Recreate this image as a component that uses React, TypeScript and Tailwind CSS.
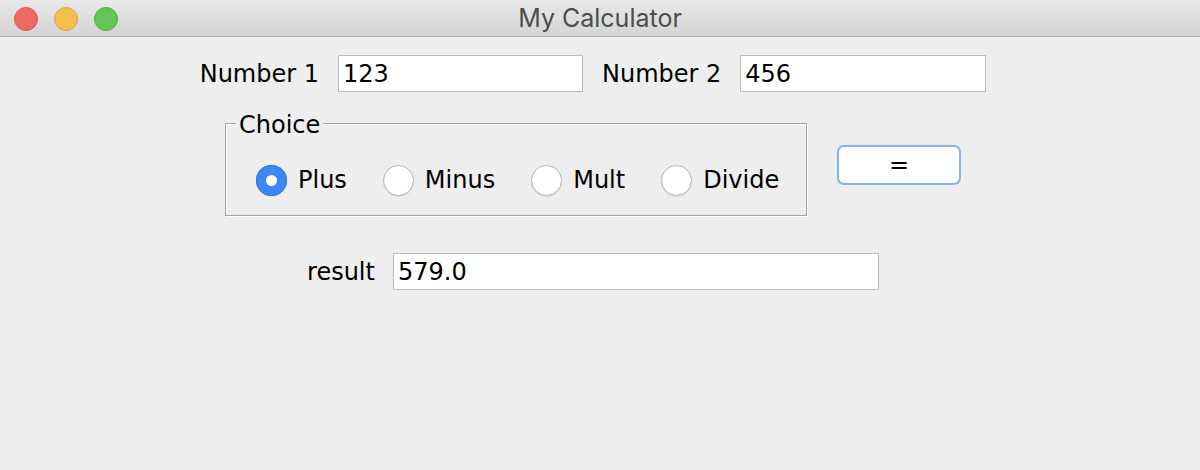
import React from 'react';

const TrafficLight = ({ className }: { className: string }) => (
  <span className={`block h-[24px] w-[24px] rounded-full border ${className}`} />
);

const TextField = ({ value, width }: { value: string; width: string }) => (
  <input
    readOnly
    value={value}
    className={`h-[37px] ${width} border border-[#bcbcbc] bg-white pl-[4px] text-black outline-none`}
  />
);

const Radio = ({ label, checked }: { label: string; checked?: boolean }) => (
  <label className="flex items-center gap-[11px]">
    {checked ? (
      <span className="flex h-[31px] w-[31px] items-center justify-center rounded-full bg-[#3b87f6] shadow-[inset_0_0_0_1px_#3179e6]">
        <span className="h-[11px] w-[11px] rounded-full bg-white" />
      </span>
    ) : (
      <span className="h-[31px] w-[31px] rounded-full border border-[#b5b5b5] bg-white shadow-[0_1px_1px_rgba(0,0,0,0.08)]" />
    )}
    <span>{label}</span>
  </label>
);

export default function App() {
  return (
    <div className="h-[470px] w-[1200px] overflow-hidden bg-[#eeeeee]">
      {/* Window title bar */}
      <div className="grid h-[37px] grid-cols-[1fr_auto_1fr] items-center border-b border-[#b4b4b4] bg-gradient-to-b from-[#e9e9e9] to-[#d4d4d4] pb-[3px]">
        <div className="flex items-center gap-[16px] pl-[14px]">
          <TrafficLight className="border-[#d8574c] bg-[#ee6a5f]" />
          <TrafficLight className="border-[#dba443] bg-[#f5bf4f]" />
          <TrafficLight className="border-[#4fae42] bg-[#62c554]" />
        </div>
        <div className="font-['Inter',sans-serif] text-[25px] text-[#4d4d4d]">My Calculator</div>
        <div />
      </div>

      <div className="flex flex-col items-center pr-[14px] pt-[18px] font-['DejaVu_Sans',sans-serif] text-[24px] text-black">
        {/* Inputs */}
        <div className="flex items-center gap-[19px]">
          <span>Number 1</span>
          <TextField value="123" width="w-[245px]" />
          <span>Number 2</span>
          <TextField value="456" width="w-[246px]" />
        </div>

        {/* Operation choice */}
        <div className="mt-[17px] flex items-start gap-[30px]">
          <fieldset className="w-[582px] border border-[#a3a3a3] pb-[17px] shadow-[1px_1px_0_#ffffff,inset_1px_1px_0_#ffffff]">
            <legend className="ml-[10px] bg-[#eeeeee] px-[3px] leading-[28px]">
              <span className="relative top-[2px]">Choice</span>
            </legend>
            <div className="flex items-center gap-[36px] pl-[30px] pt-[25px]">
              <Radio label="Plus" checked />
              <Radio label="Minus" />
              <Radio label="Mult" />
              <Radio label="Divide" />
            </div>
          </fieldset>
          <button className="mt-[36px] h-[40px] w-[124px] rounded-[7px] border-2 border-[#84b3ef] bg-white leading-none">
            =
          </button>
        </div>

        {/* Result */}
        <div className="mt-[37px] flex items-center gap-[18px]">
          <span>result</span>
          <TextField value="579.0" width="w-[486px]" />
        </div>
      </div>
    </div>
  );
}
